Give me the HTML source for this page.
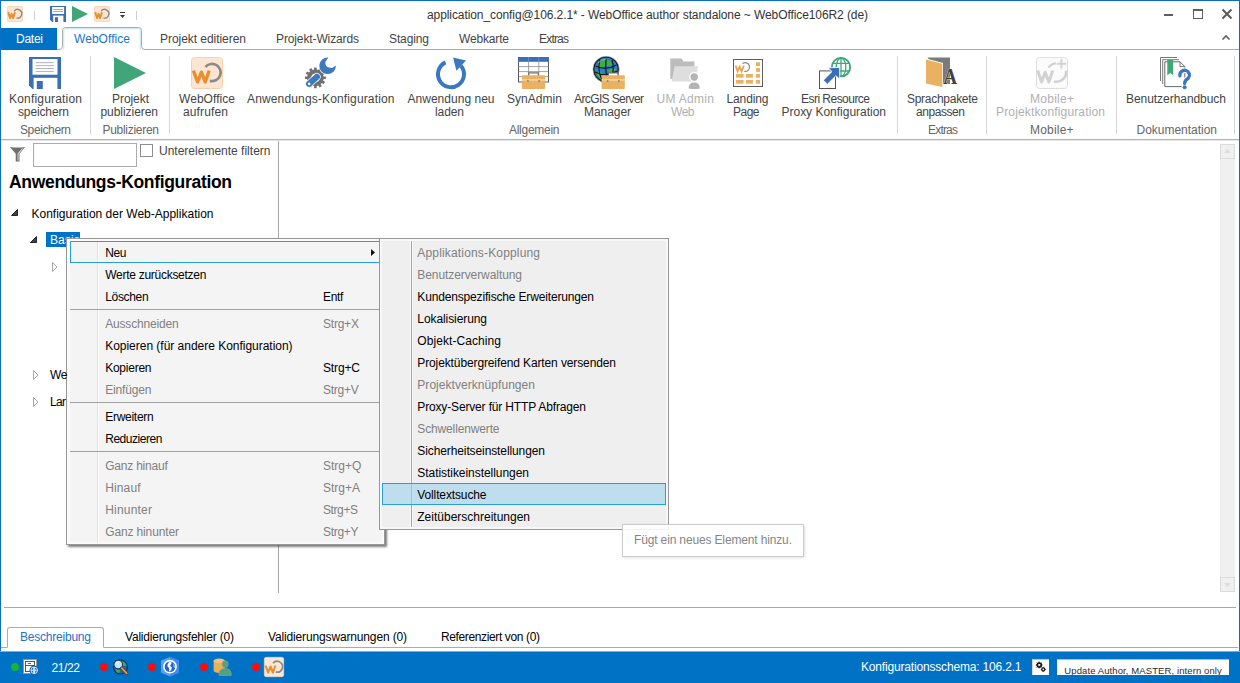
<!DOCTYPE html>
<html><head><meta charset="utf-8"><title>WebOffice author</title>
<style>
html,body{margin:0;padding:0;}
body{width:1240px;height:683px;overflow:hidden;background:#fff;position:relative;font-family:"Liberation Sans",sans-serif;}
.a{position:absolute;}
.t{position:absolute;white-space:pre;}
.sep{position:absolute;width:1px;background:#d6d6d6;top:56px;height:78px;}
.ms{position:absolute;height:1px;background:#a0a0a0;}
svg{position:absolute;overflow:visible;}
</style></head><body>
<!-- window border -->
<div class="a" style="left:0;top:0;width:1240px;height:1px;background:#0a70c6"></div>
<div class="a" style="left:0;top:0;width:1px;height:683px;background:#0a70c6"></div>
<div class="a" style="left:1239px;top:0;width:1px;height:683px;background:#0a70c6"></div>

<!-- quick access separators -->
<div class="a" style="left:34px;top:11px;width:1px;height:9px;background:#d0d0d0"></div>
<div class="a" style="left:136px;top:11px;width:1px;height:9px;background:#d0d0d0"></div>
<svg style="left:7px;top:6px" width="16" height="16" viewBox="0 0 16 16"><rect x="0.5" y="0.5" width="15" height="15" rx="1.2" fill="#fce5d2" stroke="#fad8b8" stroke-width="1"/><path d="M1.2,6.1 L3.1,12.1 L4.6,7.8 L6.1,12.1 L8,6.1" fill="none" stroke="#e8902f" stroke-width="1.9" stroke-linejoin="round"/><path d="M7.2,5 A4.3,4.3 0 1 1 9.4,11.9" fill="none" stroke="#8d8a87" stroke-width="1.4"/></svg><svg style="left:50px;top:6px" width="16" height="16" viewBox="0 0 16 16"><path d="M0,0 H16 V16 H2.2 L0,13.8 Z" fill="#3a6eb5"/><rect x="2.1" y="1" width="12" height="7" fill="#fff"/><path d="M3.2,3.5 H13 M3.2,5.5 H13" stroke="#a3a3a3" stroke-width="0.9"/><rect x="3.2" y="9.6" width="10.2" height="6.4" fill="#fff"/><rect x="5" y="11.2" width="3" height="4.8" fill="#3a6eb5"/></svg><svg style="left:72px;top:6px" width="16" height="16" viewBox="0 0 32 32"><path d="M0,0 L32,16 L0,32 Z" fill="#40a578"/></svg><svg style="left:94px;top:6px" width="16" height="16" viewBox="0 0 16 16"><rect x="0.5" y="0.5" width="15" height="15" rx="1.2" fill="#fce5d2" stroke="#fad8b8" stroke-width="1"/><path d="M1.2,6.1 L3.1,12.1 L4.6,7.8 L6.1,12.1 L8,6.1" fill="none" stroke="#e8902f" stroke-width="1.9" stroke-linejoin="round"/><path d="M7.2,5 A4.3,4.3 0 1 1 9.4,11.9" fill="none" stroke="#8d8a87" stroke-width="1.4"/></svg><div class="a" style="left:120px;top:12px;width:5px;height:1px;background:#333"></div><svg style="left:120px;top:15px" width="5" height="3" viewBox="0 0 5 3"><path d="M0,0 H5 L2.5,3 Z" fill="#333"/></svg>

<!-- window buttons -->
<div class="a" style="left:1164px;top:14px;width:9px;height:2px;background:#5f5f5f"></div>
<div class="a" style="left:1193px;top:9px;width:8px;height:7px;border:1px solid #5f5f5f;border-top-width:2px"></div>
<svg style="left:1222px;top:9px" width="10" height="10" viewBox="0 0 10 10"><path d="M0.5,0.5 L9.5,9.5 M9.5,0.5 L0.5,9.5" stroke="#5a5a5a" stroke-width="2" fill="none"/></svg>
<svg style="left:1222px;top:35px" width="8" height="5" viewBox="0 0 8 5"><path d="M0.5,4.5 L4,1 L7.5,4.5" stroke="#5f5f5f" stroke-width="1.6" fill="none"/></svg>

<!-- tabs row -->
<div class="a" style="left:1px;top:49px;width:1238px;height:1px;background:#ababab"></div>
<div class="a" style="left:1px;top:28px;width:56px;height:22px;background:#0072c6"></div>
<svg style="left:0;top:0" width="160" height="52" viewBox="0 0 160 52"><path d="M58.5,50.5 H145.5 V49.5 Q141.5,49.5 141.5,46.5 V30.5 Q141.5,27.5 138.5,27.5 H65.5 Q62.5,27.5 62.5,30.5 V46.5 Q62.5,49.5 58.5,49.5 Z" fill="#fff"/><path d="M63.5,49.5 V31 Q63.5,28.5 66,28.5 H138 Q140.5,28.5 140.5,31 V49.5" fill="none" stroke="#d3e9fb" stroke-width="1"/><path d="M64.5,49 V31 Q64.5,29.5 66,29.5 H138 Q139.5,29.5 139.5,31 V49" fill="none" stroke="#eef7fe" stroke-width="1"/><path d="M57,49.5 H59 Q62.5,49.5 62.5,46.5 V30.5 Q62.5,27.5 65.5,27.5 H138.5 Q141.5,27.5 141.5,30.5 V46.5 Q141.5,49.5 145,49.5 H147" fill="none" stroke="#ababab" stroke-width="1"/></svg>

<!-- ribbon -->
<div class="a" style="left:1px;top:139px;width:1238px;height:1px;background:#b2b2b2"></div>
<div class="a" style="left:1px;top:140px;width:1238px;height:1px;background:#e6e6e6"></div>
<div class="sep" style="left:90px"></div>
<div class="sep" style="left:169px"></div>
<div class="sep" style="left:897px"></div>
<div class="sep" style="left:986px"></div>
<div class="sep" style="left:1116px"></div>
<div class="sep" style="left:1234px"></div>
<svg style="left:29px;top:57px" width="32" height="32" viewBox="0 0 32 32"><path d="M0,0 H32 V32 H3.5 L0,28.5 Z" fill="#3a6eb5"/><rect x="3.5" y="2" width="25" height="15.7" fill="#fff"/><path d="M6.7,5.7 H24.8 M6.7,8.6 H24.8 M6.7,11.5 H24.8 M6.7,14.4 H24.8" stroke="#a9a9a9" stroke-width="0.9"/><rect x="4.6" y="20.8" width="23.8" height="11.2" fill="#fff"/><rect x="7.8" y="24" width="6" height="8" fill="#3a6eb5"/></svg><svg style="left:114px;top:57px" width="32" height="32" viewBox="0 0 32 32"><path d="M0,0 L32,16 L0,32 Z" fill="#40a578"/></svg><svg style="left:191px;top:57px" width="32" height="32" viewBox="0 0 32 32"><rect x="0.5" y="0.5" width="31" height="31" rx="3" fill="#fce5d2" stroke="#f9d0aa" stroke-width="1"/><path d="M2.4,13.6 L6.6,25 L10.4,15.2 L14.2,25 L18.2,13.6" fill="none" stroke="#e8902f" stroke-width="3.4" stroke-linejoin="round"/><path d="M14.4,9.9 A8.65,8.65 0 1 1 18.8,23.9" fill="none" stroke="#8d8a87" stroke-width="2.7"/></svg><svg style="left:305px;top:57px" width="32" height="32" viewBox="0 0 32 32"><path d="M20.82,19.48 L20.82,22.12 L18.60,22.10 L18.15,23.77 L20.08,24.87 L18.76,27.15 L16.85,26.02 L15.62,27.25 L16.75,29.16 L14.47,30.48 L13.37,28.55 L11.70,29.00 L11.72,31.22 L9.08,31.22 L9.10,29.00 L7.43,28.55 L6.33,30.48 L4.05,29.16 L5.18,27.25 L3.95,26.02 L2.04,27.15 L0.72,24.87 L2.65,23.77 L2.20,22.10 L-0.02,22.12 L-0.02,19.48 L2.20,19.50 L2.65,17.83 L0.72,16.73 L2.04,14.45 L3.95,15.58 L5.18,14.35 L4.05,12.44 L6.33,11.12 L7.43,13.05 L9.10,12.60 L9.08,10.38 L11.72,10.38 L11.70,12.60 L13.37,13.05 L14.47,11.12 L16.75,12.44 L15.62,14.35 L16.85,15.58 L18.76,14.45 L20.08,16.73 L18.15,17.83 L18.60,19.50 Z M10.4,16.5 a4.3,4.3 0 1 0 0.01,0 Z" fill="#707070" fill-rule="evenodd"/><path d="M23.4,0.55 A8.3,8.3 0 1 0 30.9,8.6 L27,11.1 Q23.6,10.8 21.4,9.2 Q19.9,6.6 20.4,4.7 Z" fill="#3c7abf" stroke="#fff" stroke-width="1.3" paint-order="stroke" stroke-linejoin="round"/><g transform="rotate(-42 8 23.4)"><rect x="-0.3" y="20.3" width="16.6" height="6.2" rx="2.9" fill="#3c7abf" stroke="#fff" stroke-width="1.3" paint-order="stroke"/><circle cx="2.9" cy="23.4" r="1.3" fill="#fff"/></g></svg><svg style="left:436px;top:57px" width="32" height="32" viewBox="0 0 32 32"><path d="M9.57,5.39 A13,13 0 1 0 24.9,8.78" fill="none" stroke="#3b79bf" stroke-width="4"/><path d="M17.1,0.5 L30,3.6 L20.4,13.8 Z" fill="#3b79bf"/></svg><svg style="left:518px;top:57px" width="32" height="32" viewBox="0 0 32 32"><rect x="0.5" y="0.5" width="30" height="24.5" fill="#fff" stroke="#5a5a5a" stroke-width="1"/><rect x="0" y="0" width="31" height="4.8" fill="#3a6eb5"/><path d="M0.5,9.6 H30.5 M0.5,14.6 H30.5 M0.5,19.6 H30.5 M10.6,4.8 V25 M20.8,4.8 V25" stroke="#8c8c8c" stroke-width="0.8"/><path d="M10.6,0 V4.8 M20.8,0 V4.8" stroke="#6f93c9" stroke-width="0.8"/><rect x="10.7" y="15.9" width="9.6" height="4" fill="#fff" stroke="#6a6a6a" stroke-width="1.2"/><rect x="3.9" y="18.3" width="23.2" height="13.8" rx="0.8" fill="#e9b161"/><rect x="3.9" y="22.5" width="23.2" height="0.9" fill="#fbf0dc"/><rect x="9.1" y="22.9" width="1.6" height="2.2" fill="#9a8a70"/><rect x="20.299999999999997" y="22.9" width="1.6" height="2.2" fill="#9a8a70"/></svg><svg style="left:593px;top:57px" width="32" height="32" viewBox="0 0 32 32"><circle cx="13.1" cy="12.4" r="13.2" fill="#1b1b1b" stroke="#c9c9c9" stroke-width="0.6"/><circle cx="13.1" cy="12.4" r="11.6" fill="#2d7fd0"/><path d="M6,5 Q10,3 14,2.2 Q18,4 20,8 Q16,10 12,9 Q9,11 6,12 Q4,9 6,5 Z" fill="#3fae3c"/><path d="M15,13 Q19,11 23,12 Q24,16 21,20 Q17,19 15,13 Z" fill="#3fae3c"/><path d="M3,15 Q6,14 9,16 Q10,19 8,22 Q4,19 3,15 Z" fill="#49b845"/><path d="M2.5,9 Q13,14 23.5,8 M2,15 Q13,21 24,14 M7,3 Q4,12 9,23 M13,1.6 Q12,12 14,23.6 M19,3 Q22,12 18,22.5" fill="none" stroke="#101010" stroke-width="1.1"/><path d="M5,6 Q8,2.5 13,2" fill="none" stroke="#9fd0ff" stroke-width="1" opacity="0.7"/><rect x="15.399999999999999" y="15.9" width="9.6" height="4" fill="#fff" stroke="#6a6a6a" stroke-width="1.2"/><rect x="8.6" y="18.3" width="23.2" height="13.8" rx="0.8" fill="#e9b161"/><rect x="8.6" y="22.5" width="23.2" height="0.9" fill="#fbf0dc"/><rect x="13.8" y="22.9" width="1.6" height="2.2" fill="#9a8a70"/><rect x="24.999999999999996" y="22.9" width="1.6" height="2.2" fill="#9a8a70"/></svg><svg style="left:670px;top:57px" width="32" height="32" viewBox="0 0 32 32"><path d="M0.3,1.5 H11.5 L13.6,4.4 H24.4 V22 H0.3 Z" fill="#bcbcbc"/><path d="M4.6,9.2 H28 L25.4,24.4 H1.6 Z" fill="#dedede"/><circle cx="24.2" cy="20" r="5" fill="#fff"/><circle cx="24.2" cy="20" r="3.7" fill="#b4b4b4"/><path d="M17.4,32 Q17.4,24.6 24.2,24.6 Q31,24.6 31,32 Z" fill="#fff"/><path d="M18.6,31.4 Q18.6,25.6 24.2,25.6 Q29.8,25.6 29.8,31.4 Q24.2,32.6 18.6,31.4 Z" fill="#b4b4b4"/></svg><svg style="left:733px;top:57px" width="32" height="32" viewBox="0 0 32 32"><rect x="0.5" y="2.5" width="29" height="27" fill="#fff" stroke="#5e5e5e" stroke-width="1"/><path d="M2.6,8.6 L4.6,14.4 L6.6,9.6 L8.6,14.4 L10.8,8.6" fill="none" stroke="#e8a24a" stroke-width="1.7"/><path d="M9.4,6.6 A4.4,4.4 0 1 1 11.4,14.4" fill="none" stroke="#8d8a87" stroke-width="1.2"/><g fill="#e9b161"><rect x="23" y="5.3" width="4" height="3.8"/><rect x="23" y="11.1" width="4" height="3.8"/><rect x="23" y="17" width="4" height="3.7"/><rect x="23" y="23" width="4" height="3.7"/><rect x="2.9" y="17" width="7.7" height="3.7"/><rect x="13" y="17" width="6.9" height="3.7"/><rect x="2.9" y="23" width="7.7" height="3.7"/><rect x="13" y="23" width="6.9" height="3.7"/></g></svg><svg style="left:819px;top:57px" width="32" height="32" viewBox="0 0 32 32"><circle cx="22" cy="10.2" r="9.2" fill="#fff" stroke="#3fa778" stroke-width="1.9"/><ellipse cx="22" cy="10.2" rx="4.8" ry="9.2" fill="none" stroke="#3fa778" stroke-width="1.3"/><path d="M22,0.9 V19.5 M13.4,6.4 H30.6 M13.4,14 H30.6" stroke="#3fa778" stroke-width="1.3" fill="none"/><rect x="0.5" y="13.9" width="16" height="17.6" fill="#fff" stroke="#555" stroke-width="1"/><path d="M20.6,10.4 L20.6,22.2 L17,18.6 L8.4,27.2 L4.4,23.2 L13,14.6 L9.2,10.8 Z" fill="#3a6eb5" stroke="#fff" stroke-width="0.8"/></svg><svg style="left:926px;top:56.5px" width="32" height="32" viewBox="0 0 32 32"><path d="M1.6,0.4 H24 V27 H17 Z" fill="#7b7b7b"/><path d="M0,1.6 L17,6 L17,30.2 L0,26.4 Z" fill="#fff"/><path d="M0,2.4 L16.3,6.7 L16.3,30 L0,26.4 Z" fill="#e9b161"/><text transform="translate(17.2,27.3) scale(0.8,1)" font-family="Liberation Serif, serif" font-weight="700" font-size="24" fill="#3f3f3f" stroke="#fff" stroke-width="0.6" paint-order="stroke">A</text></svg><svg style="left:1036px;top:57px" width="32" height="32" viewBox="0 0 32 32"><rect x="0.5" y="0.5" width="31" height="31" rx="3" fill="#fbfbfb" stroke="#dedede" stroke-width="1"/><path d="M1.6,13.6 L5.6,25 L9.2,15.2 L12.8,25 L16.8,13.6" fill="none" stroke="#d2d2d2" stroke-width="3" stroke-linejoin="round"/><path d="M12.4,10.6 Q15.6,6.6 20,6.4" fill="none" stroke="#d2d2d2" stroke-width="2.2"/><path d="M30,13.6 A9.6,9.6 0 0 1 18,24.4" fill="none" stroke="#d2d2d2" stroke-width="2.6"/><path d="M25.4,2 V11.6 M20.6,6.8 H30.2" stroke="#d2d2d2" stroke-width="2"/></svg><svg style="left:1160px;top:57px" width="32" height="32" viewBox="0 0 32 32"><path d="M0.5,24 V0.5 H17" fill="none" stroke="#6a6a6a" stroke-width="0.9"/><path d="M2.7,27 V2.7 H19" fill="none" stroke="#6a6a6a" stroke-width="0.9"/><path d="M4.8,4.8 H20 L24.8,9.6 V29.6 H4.8 Z" fill="#fff" stroke="#6a6a6a" stroke-width="1"/><path d="M20,4.8 V9.6 H24.8" fill="none" stroke="#6a6a6a" stroke-width="0.9"/><path d="M7.3,2.9 H13.2 V18.2 L10.25,16 L7.3,18.2 Z" fill="#3fa778"/><path d="M19.9,18.8 A4.8,4.8 0 1 1 28.3,21.2 Q24.6,23.2 24.6,26.4" fill="none" stroke="#fff" stroke-width="5.4" stroke-linecap="round"/><circle cx="24.6" cy="30.2" r="3" fill="#fff"/><path d="M19.9,18.8 A4.8,4.8 0 1 1 28.3,21.2 Q24.6,23.2 24.6,26.4" fill="none" stroke="#3a76c2" stroke-width="3.3" stroke-linecap="round"/><circle cx="24.6" cy="30.2" r="2" fill="#3a76c2"/></svg>

<!-- left panel -->
<svg style="left:10.3px;top:147.4px" width="15.2" height="14.4" viewBox="0 0 15.2 14.4"><path d="M0,0 Q7.6,1.2 15.2,0 L9.5,6.8 V14.4 H5.7 V6.8 Z" fill="#6f6f6f"/><path d="M13.4,1.2 L8.6,7 V13.6 H7.6 V6.6 L12,1.4 Z" fill="#dcdcdc"/></svg>
<div class="a" style="left:33px;top:143px;width:102px;height:22px;border:1px solid #ababab;background:#fff"></div>
<div class="a" style="left:140px;top:144px;width:11px;height:11px;border:1px solid #8e8e8e;background:#fff"></div>
<div class="a" style="left:278px;top:141px;width:1px;height:452px;background:#a8a8a8"></div>
<!-- tree expanders -->
<svg style="left:11.3px;top:209px" width="7" height="7" viewBox="0 0 7 7"><path d="M6.5,0.5 V6.5 H0.5 Z" fill="#404040" stroke="#262626" stroke-width="1"/></svg>
<svg style="left:30px;top:236px" width="7" height="7" viewBox="0 0 7 7"><path d="M6.5,0.5 V6.5 H0.5 Z" fill="#404040" stroke="#262626" stroke-width="1"/></svg>
<svg style="left:52px;top:262px" width="6" height="10" viewBox="0 0 6 10"><path d="M0.5,0.5 L5,5 L0.5,9.5 Z" fill="#fff" stroke="#a6a6a6" stroke-width="1"/></svg>
<svg style="left:33px;top:370px" width="6" height="10" viewBox="0 0 6 10"><path d="M0.5,0.5 L5,5 L0.5,9.5 Z" fill="#fff" stroke="#a6a6a6" stroke-width="1"/></svg>
<svg style="left:33px;top:397px" width="6" height="10" viewBox="0 0 6 10"><path d="M0.5,0.5 L5,5 L0.5,9.5 Z" fill="#fff" stroke="#a6a6a6" stroke-width="1"/></svg>
<!-- selected Basis -->
<div class="a" style="left:46px;top:232px;width:34px;height:15px;background:#0072c8"></div>
<div class="t" style="left:50px;top:232px;font-size:12px;line-height:16px;color:#fff;letter-spacing:0.1px">Basis</div>

<!-- scrollbar -->
<div class="a" style="left:1220px;top:144px;width:15px;height:448px;background:#f0f0f0"></div>
<div class="a" style="left:1220px;top:144px;width:14px;height:14px;border:1px solid #dadada;background:#f0f0f0;box-sizing:content-box;width:13px;height:13px"></div>
<div class="a" style="left:1220px;top:577px;width:13px;height:13px;border:1px solid #dadada;background:#f0f0f0"></div>
<svg style="left:1224px;top:149px" width="7" height="4" viewBox="0 0 7 4"><path d="M0,4 L3.5,0 L7,4 Z" fill="#dcdcdc"/></svg>
<svg style="left:1224px;top:583px" width="7" height="4" viewBox="0 0 7 4"><path d="M0,0 L3.5,4 L7,0 Z" fill="#dcdcdc"/></svg>

<!-- bottom area -->
<div class="a" style="left:4px;top:607px;width:1232px;height:1px;background:#a8a8a8"></div>
<div class="a" style="left:1px;top:647px;width:1237px;height:1px;background:#ababab"></div>
<div class="a" style="left:7px;top:627px;width:97px;height:21px;border:1px solid #ababab;border-bottom:1px solid #fff;border-radius:3px 3px 0 0;background:#fff;box-sizing:border-box"></div>
<!-- status bar -->
<div class="a" style="left:0;top:651px;width:1240px;height:32px;background:#0072c6;box-sizing:border-box;border-top:1px solid #86a9c6"></div>
<div class="a" style="left:11px;top:663px;width:8px;height:8px;border-radius:50%;background:#10b735"></div>
<div class="a" style="left:100px;top:663px;width:8px;height:8px;border-radius:50%;background:#f80d0d"></div>
<div class="a" style="left:148px;top:663px;width:8px;height:8px;border-radius:50%;background:#f80d0d"></div>
<div class="a" style="left:200px;top:663px;width:8px;height:8px;border-radius:50%;background:#f80d0d"></div>
<div class="a" style="left:252px;top:663px;width:8px;height:8px;border-radius:50%;background:#f80d0d"></div>
<div class="a" style="left:1032px;top:659px;width:17px;height:16px;background:#fff;box-sizing:border-box;border-top:1px solid #c4c4c4;border-left:1px solid #d8d8d8"></div>
<div class="a" style="left:1057px;top:659px;width:172px;height:16px;background:#fff;overflow:hidden;box-sizing:border-box;border-top:1px solid #b9b9b9">
  <div class="t" style="left:7.3px;top:3.9px;font-size:9.5px;line-height:14px;color:#2b2b2b;letter-spacing:0.1px">Update Author, MASTER, intern only</div>
</div>
<svg style="left:23px;top:659px" width="16" height="16" viewBox="0 0 16 16"><rect x="0.5" y="0.5" width="13" height="14" fill="#fff" stroke="#a39484" stroke-width="1"/><rect x="2.5" y="2.5" width="9" height="4" fill="#fff" stroke="#555" stroke-width="1"/><rect x="2.5" y="6.5" width="9" height="6" fill="#fff" stroke="#555" stroke-width="1"/><path d="M4.8,4.5 H8" stroke="#2f6fc0" stroke-width="1.1"/><circle cx="11.2" cy="11.3" r="4.7" fill="#0a63b8"/><circle cx="11.2" cy="11.3" r="3.3" fill="#1269c4" stroke="#fff" stroke-width="0.8"/><path d="M7.9,11.3 H14.5 M11.2,8 V14.6 M11.2,8 Q9.2,11.3 11.2,14.6 M11.2,8 Q13.2,11.3 11.2,14.6" stroke="#fff" stroke-width="0.7" fill="none"/></svg><svg style="left:112px;top:659px" width="16" height="16" viewBox="0 0 16 16"><circle cx="8.4" cy="8" r="7.6" fill="#14306b"/><circle cx="8.4" cy="8" r="6.4" fill="#1f63b5"/><path d="M9,2 Q13,2.4 14.4,6 Q12.4,8 10.4,6.4 Q9.4,4 9,2 Z M3.4,10.4 Q6,9.6 8,11.6 Q8.4,13.6 6.4,14.2 Q4,13 3.4,10.4 Z M11,9.6 Q13.6,9.6 14,11.4 Q12.6,13.4 11,12 Z" fill="#3fae49"/><circle cx="6.2" cy="5.6" r="4.3" fill="#bfe9f7" stroke="#233a5e" stroke-width="1.1"/><path d="M3.8,4.6 Q5,2.8 7,2.9" stroke="#fff" stroke-width="1" fill="none"/><path d="M9.6,9 L14.8,14.4" stroke="#5a3a1c" stroke-width="3" stroke-linecap="round"/><path d="M9.8,9.2 L14.7,14.3" stroke="#ef9a3c" stroke-width="1.7" stroke-linecap="round"/></svg><svg style="left:161px;top:657px" width="18" height="19.5" viewBox="0 0 18 19.5"><path d="M9,0 L18,3.6 V15.4 L9,19.5 L0,15.4 V3.6 Z" fill="#55a2f5"/><path d="M9,0 L18,3.6 V15.4 L9,19.5 Z" fill="#3f8aea"/><circle cx="9" cy="9.7" r="6.9" fill="#fff"/><circle cx="9" cy="9.7" r="5.3" fill="#1d63d2"/><path d="M8.6,4.6 Q11,5 10.4,7 Q8.4,8.2 9.6,9.6 Q11.6,10.2 10.4,12.4 Q9.4,14.4 7.8,14.8 Q9,12 7.6,10.6 Q5.6,9.4 6.6,7.4 Q7.4,6.4 8.6,4.6 Z" fill="#fff"/><path d="M12.4,6.4 Q14,8.6 13.6,11.4 Q12.4,10 12.4,6.4 Z" fill="#fff"/></svg><svg style="left:212.5px;top:658px" width="19" height="18" viewBox="0 0 19 18"><path d="M0.6,2.8 V12.6 A5.6,2.3 0 0 0 11.8,12.6 V2.8 Z" fill="#e9b05b"/><ellipse cx="6.2" cy="2.8" rx="5.6" ry="2.3" fill="#f1c179"/><rect x="9.3" y="3" width="5.8" height="6.2" rx="2.2" fill="#4fa47c" stroke="#8b9a8c" stroke-width="0.8"/><path d="M6,17.4 Q5.6,10.4 12.2,10.6 Q18.6,10.4 18.2,17.4 Z" fill="#4fa47c" stroke="#8b9a8c" stroke-width="0.8"/></svg><svg style="left:264px;top:657px" width="20" height="20" viewBox="0 0 32 32"><rect x="0.5" y="0.5" width="31" height="31" rx="3" fill="#fce8d8" stroke="#f7d9bd" stroke-width="1"/><path d="M2.4,13.6 L6.6,25 L10.4,15.2 L14.2,25 L18.2,13.6" fill="none" stroke="#e8902f" stroke-width="3.4" stroke-linejoin="round"/><path d="M14.4,9.9 A8.65,8.65 0 1 1 18.8,23.9" fill="none" stroke="#8d8a87" stroke-width="2.7"/></svg><svg style="left:1035px;top:661px" width="12" height="12" viewBox="0 0 12 12"><circle cx="4.2" cy="4" r="2.1" fill="none" stroke="#111" stroke-width="1.5"/><path d="M4.2,0.6 V7.4 M0.8,4 H7.6 M1.8,1.6 L6.6,6.4 M6.6,1.6 L1.8,6.4" stroke="#111" stroke-width="0.9"/><circle cx="4.2" cy="4" r="1.1" fill="#fff"/><circle cx="8.3" cy="8.4" r="1.5" fill="#fff" stroke="#111" stroke-width="1.3"/><path d="M8.3,5.9 V10.9 M5.8,8.4 H10.8" stroke="#111" stroke-width="0.8"/><circle cx="8.3" cy="8.4" r="0.8" fill="#fff"/></svg>

<!-- context menu 1 -->
<div class="a" style="left:66px;top:238px;width:317px;height:305px;background:#f4f4f4;border:1px solid #979797;box-shadow:2px 2px 2px rgba(0,0,0,0.5)"></div>
<div class="a" style="left:67px;top:239px;width:317px;height:305px;box-sizing:border-box;border:2px solid #fafafa;border-left-width:3px"></div>
<div class="a" style="left:97px;top:241px;width:1px;height:302px;background:#e2e2e2"></div>
<div class="a" style="left:98px;top:241px;width:1px;height:302px;background:#fdfdfd"></div>
<div class="a" style="left:70px;top:241px;width:310px;height:20px;border:1px solid #26a0da;background:transparent"></div>
<div class="ms" style="left:70px;top:309px;width:310px"></div>
<div class="ms" style="left:70px;top:402px;width:310px"></div>
<div class="ms" style="left:70px;top:451px;width:310px"></div>
<svg style="left:371px;top:249px" width="4" height="7" viewBox="0 0 4 7"><path d="M0,0 L4,3.5 L0,7 Z" fill="#111"/></svg>

<!-- submenu -->
<div class="a" style="left:379px;top:238px;width:288px;height:290px;background:#efefef;border:1px solid #979797"></div>
<div class="a" style="left:380px;top:239px;width:288px;height:290px;box-sizing:border-box;border:2px solid #f8f8f8"></div>
<div class="a" style="left:410px;top:241px;width:1px;height:286px;background:#f8f8f8"></div>
<div class="a" style="left:411px;top:241px;width:1px;height:286px;background:#a6a6a6"></div>
<div class="a" style="left:412px;top:241px;width:1px;height:286px;background:#f8f8f8"></div>
<div class="a" style="left:382px;top:483px;width:282px;height:20px;border:1px solid #26a0da;background:rgba(150,205,235,0.55)"></div>

<!-- tooltip -->
<div class="a" style="left:622px;top:524px;width:180px;height:31px;border:1px solid rgba(160,160,160,0.55);background:rgba(255,255,255,0.88);box-shadow:1px 1px 3px rgba(0,0,0,0.12)"></div>

<div class="t" style="left:427px;top:7.0px;font-size:12px;line-height:16px;color:#333;font-weight:400;letter-spacing:-0.089px">application_config@106.2.1* - WebOffice author standalone ~ WebOffice106R2 (de)</div>
<div class="t" style="left:16px;top:31.0px;font-size:12px;line-height:16px;color:#fff;font-weight:400;letter-spacing:-0.254px">Datei</div>
<div class="t" style="left:74px;top:31.0px;font-size:12px;line-height:16px;color:#1e72c8;font-weight:400;letter-spacing:0.051px">WebOffice</div>
<div class="t" style="left:160px;top:31.0px;font-size:12px;line-height:16px;color:#444444;font-weight:400;letter-spacing:-0.045px">Projekt editieren</div>
<div class="t" style="left:276px;top:31.0px;font-size:12px;line-height:16px;color:#444444;font-weight:400;letter-spacing:-0.121px">Projekt-Wizards</div>
<div class="t" style="left:389px;top:31.0px;font-size:12px;line-height:16px;color:#444444;font-weight:400;letter-spacing:-0.117px">Staging</div>
<div class="t" style="left:459px;top:31.0px;font-size:12px;line-height:16px;color:#444444;font-weight:400;letter-spacing:-0.163px">Webkarte</div>
<div class="t" style="left:539px;top:31.0px;font-size:12px;line-height:16px;color:#444444;font-weight:400;letter-spacing:-0.803px">Extras</div>
<div class="t" style="left:9px;top:91.0px;font-size:12px;line-height:16px;color:#444444;font-weight:400;letter-spacing:0.19px">Konfiguration</div>
<div class="t" style="left:18px;top:104.0px;font-size:12px;line-height:16px;color:#444444;font-weight:400;letter-spacing:-0.129px">speichern</div>
<div class="t" style="left:20px;top:122.0px;font-size:12px;line-height:16px;color:#666;font-weight:400;letter-spacing:-0.381px">Speichern</div>
<div class="t" style="left:112px;top:91.0px;font-size:12px;line-height:16px;color:#444444;font-weight:400;letter-spacing:-0.06px">Projekt</div>
<div class="t" style="left:100.5px;top:104.0px;font-size:12px;line-height:16px;color:#444444;font-weight:400;letter-spacing:-0.055px">publizieren</div>
<div class="t" style="left:102.5px;top:122.0px;font-size:12px;line-height:16px;color:#666;font-weight:400;letter-spacing:-0.287px">Publizieren</div>
<div class="t" style="left:179px;top:91.0px;font-size:12px;line-height:16px;color:#444444;font-weight:400;letter-spacing:0.051px">WebOffice</div>
<div class="t" style="left:183px;top:104.0px;font-size:12px;line-height:16px;color:#444444;font-weight:400;letter-spacing:0.136px">aufrufen</div>
<div class="t" style="left:247px;top:91.0px;font-size:12px;line-height:16px;color:#444444;font-weight:400;letter-spacing:0.147px">Anwendungs-Konfiguration</div>
<div class="t" style="left:407.5px;top:91.0px;font-size:12px;line-height:16px;color:#444444;font-weight:400;letter-spacing:0.021px">Anwendung neu</div>
<div class="t" style="left:435px;top:104.0px;font-size:12px;line-height:16px;color:#444444;font-weight:400;letter-spacing:-0.094px">laden</div>
<div class="t" style="left:507px;top:91.0px;font-size:12px;line-height:16px;color:#444444;font-weight:400;letter-spacing:0.042px">SynAdmin</div>
<div class="t" style="left:509px;top:122.0px;font-size:12px;line-height:16px;color:#666;font-weight:400;letter-spacing:-0.275px">Allgemein</div>
<div class="t" style="left:574px;top:91.0px;font-size:12px;line-height:16px;color:#444444;font-weight:400;letter-spacing:-0.613px">ArcGIS Server</div>
<div class="t" style="left:584px;top:104.0px;font-size:12px;line-height:16px;color:#444444;font-weight:400;letter-spacing:-0.062px">Manager</div>
<div class="t" style="left:656.5px;top:91.0px;font-size:12px;line-height:16px;color:#b0b0b0;font-weight:400;letter-spacing:0.306px">UM Admin</div>
<div class="t" style="left:671px;top:104.0px;font-size:12px;line-height:16px;color:#b0b0b0;font-weight:400;letter-spacing:-0.484px">Web</div>
<div class="t" style="left:726.5px;top:91.0px;font-size:12px;line-height:16px;color:#444444;font-weight:400;letter-spacing:-0.12px">Landing</div>
<div class="t" style="left:733px;top:104.0px;font-size:12px;line-height:16px;color:#444444;font-weight:400;letter-spacing:-0.51px">Page</div>
<div class="t" style="left:801px;top:91.0px;font-size:12px;line-height:16px;color:#444444;font-weight:400;letter-spacing:-0.53px">Esri Resource</div>
<div class="t" style="left:781.5px;top:104.0px;font-size:12px;line-height:16px;color:#444444;font-weight:400;letter-spacing:-0.013px">Proxy Konfiguration</div>
<div class="t" style="left:907px;top:91.0px;font-size:12px;line-height:16px;color:#444444;font-weight:400;letter-spacing:-0.278px">Sprachpakete</div>
<div class="t" style="left:916px;top:104.0px;font-size:12px;line-height:16px;color:#444444;font-weight:400;letter-spacing:-0.435px">anpassen</div>
<div class="t" style="left:928px;top:122.0px;font-size:12px;line-height:16px;color:#666;font-weight:400;letter-spacing:-0.803px">Extras</div>
<div class="t" style="left:1030px;top:91.0px;font-size:12px;line-height:16px;color:#b0b0b0;font-weight:400;letter-spacing:0.273px">Mobile+</div>
<div class="t" style="left:996px;top:104.0px;font-size:12px;line-height:16px;color:#b0b0b0;font-weight:400;letter-spacing:0.155px">Projektkonfiguration</div>
<div class="t" style="left:1030px;top:122.0px;font-size:12px;line-height:16px;color:#666;font-weight:400;letter-spacing:0.19px">Mobile+</div>
<div class="t" style="left:1126px;top:91.0px;font-size:12px;line-height:16px;color:#444444;font-weight:400;letter-spacing:-0.05px">Benutzerhandbuch</div>
<div class="t" style="left:1136.5px;top:122.0px;font-size:12px;line-height:16px;color:#666;font-weight:400;letter-spacing:-0.018px">Dokumentation</div>
<div class="t" style="left:159px;top:143.0px;font-size:12px;line-height:16px;color:#444;font-weight:400;letter-spacing:0.005px">Unterelemente filtern</div>
<div class="t" style="left:9px;top:170.5px;font-size:17.5px;line-height:23px;color:#000;font-weight:700;letter-spacing:-0.321px">Anwendungs-Konfiguration</div>
<div class="t" style="left:31.5px;top:205.5px;font-size:12px;line-height:16px;color:#000;font-weight:400;letter-spacing:0.003px">Konfiguration der Web-Applikation</div>
<div class="t" style="left:50px;top:367.0px;font-size:12px;line-height:16px;color:#000;font-weight:400;letter-spacing:-0.297px">We</div>
<div class="t" style="left:50px;top:393.5px;font-size:12px;line-height:16px;color:#000;font-weight:400;letter-spacing:-0.672px">Lar</div>
<div class="t" style="left:20px;top:629.0px;font-size:12px;line-height:16px;color:#1e72c8;font-weight:400;letter-spacing:-0.217px">Beschreibung</div>
<div class="t" style="left:125px;top:629.0px;font-size:12px;line-height:16px;color:#000;font-weight:400;letter-spacing:-0.199px">Validierungsfehler (0)</div>
<div class="t" style="left:268px;top:629.0px;font-size:12px;line-height:16px;color:#000;font-weight:400;letter-spacing:-0.147px">Validierungswarnungen (0)</div>
<div class="t" style="left:441px;top:629.0px;font-size:12px;line-height:16px;color:#000;font-weight:400;letter-spacing:-0.371px">Referenziert von (0)</div>
<div class="t" style="left:51.5px;top:659.8px;font-size:12px;line-height:16px;color:#fff;font-weight:400;letter-spacing:-0.383px">21/22</div>
<div class="t" style="left:861px;top:658.5px;font-size:12px;line-height:16px;color:#fff;font-weight:400;letter-spacing:-0.177px">Konfigurationsschema: 106.2.1</div>
<div class="t" style="left:634px;top:532.3px;font-size:12px;line-height:16px;color:#858585;font-weight:400;letter-spacing:-0.147px">Fügt ein neues Element hinzu.</div>
<div class="t" style="left:105.2px;top:245.0px;font-size:12px;line-height:16px;color:#000;font-weight:400;letter-spacing:-0.358px">Neu</div>
<div class="t" style="left:105.2px;top:267.0px;font-size:12px;line-height:16px;color:#000;font-weight:400;letter-spacing:-0.272px">Werte zurücksetzen</div>
<div class="t" style="left:105.2px;top:289.0px;font-size:12px;line-height:16px;color:#000;font-weight:400;letter-spacing:-0.329px">Löschen</div>
<div class="t" style="left:323px;top:289.0px;font-size:12px;line-height:16px;color:#000;font-weight:400;letter-spacing:-0.32px">Entf</div>
<div class="t" style="left:105.2px;top:316.0px;font-size:12px;line-height:16px;color:#808080;font-weight:400;letter-spacing:-0.172px">Ausschneiden</div>
<div class="t" style="left:323px;top:316.0px;font-size:12px;line-height:16px;color:#808080;font-weight:400;letter-spacing:-0.226px">Strg+X</div>
<div class="t" style="left:105.2px;top:338.0px;font-size:12px;line-height:16px;color:#000;font-weight:400;letter-spacing:-0.021px">Kopieren (für andere Konfiguration)</div>
<div class="t" style="left:105.2px;top:360.0px;font-size:12px;line-height:16px;color:#000;font-weight:400;letter-spacing:-0.25px">Kopieren</div>
<div class="t" style="left:323px;top:360.0px;font-size:12px;line-height:16px;color:#000;font-weight:400;letter-spacing:-0.138px">Strg+C</div>
<div class="t" style="left:105.2px;top:382.0px;font-size:12px;line-height:16px;color:#808080;font-weight:400;letter-spacing:-0.154px">Einfügen</div>
<div class="t" style="left:323px;top:382.0px;font-size:12px;line-height:16px;color:#808080;font-weight:400;letter-spacing:-0.266px">Strg+V</div>
<div class="t" style="left:105.2px;top:409.0px;font-size:12px;line-height:16px;color:#000;font-weight:400;letter-spacing:-0.273px">Erweitern</div>
<div class="t" style="left:105.2px;top:431.0px;font-size:12px;line-height:16px;color:#000;font-weight:400;letter-spacing:-0.453px">Reduzieren</div>
<div class="t" style="left:105.2px;top:458.0px;font-size:12px;line-height:16px;color:#808080;font-weight:400;letter-spacing:-0.212px">Ganz hinauf</div>
<div class="t" style="left:323px;top:458.0px;font-size:12px;line-height:16px;color:#808080;font-weight:400;letter-spacing:-0.012px">Strg+Q</div>
<div class="t" style="left:105.2px;top:480.0px;font-size:12px;line-height:16px;color:#808080;font-weight:400;letter-spacing:0.142px">Hinauf</div>
<div class="t" style="left:323px;top:480.0px;font-size:12px;line-height:16px;color:#808080;font-weight:400;letter-spacing:-0.006px">Strg+A</div>
<div class="t" style="left:105.2px;top:502.0px;font-size:12px;line-height:16px;color:#808080;font-weight:400;letter-spacing:0.206px">Hinunter</div>
<div class="t" style="left:323px;top:502.0px;font-size:12px;line-height:16px;color:#808080;font-weight:400;letter-spacing:-0.406px">Strg+S</div>
<div class="t" style="left:105.2px;top:524.0px;font-size:12px;line-height:16px;color:#808080;font-weight:400;letter-spacing:-0.133px">Ganz hinunter</div>
<div class="t" style="left:323px;top:524.0px;font-size:12px;line-height:16px;color:#808080;font-weight:400;letter-spacing:-0.286px">Strg+Y</div>
<div class="t" style="left:417.3px;top:245.0px;font-size:12px;line-height:16px;color:#808080;font-weight:400;letter-spacing:0.164px">Applikations-Kopplung</div>
<div class="t" style="left:417.3px;top:267.0px;font-size:12px;line-height:16px;color:#808080;font-weight:400;letter-spacing:-0.08px">Benutzerverwaltung</div>
<div class="t" style="left:417.3px;top:289.0px;font-size:12px;line-height:16px;color:#000;font-weight:400;letter-spacing:-0.158px">Kundenspezifische Erweiterungen</div>
<div class="t" style="left:417.3px;top:311.0px;font-size:12px;line-height:16px;color:#000;font-weight:400;letter-spacing:-0.085px">Lokalisierung</div>
<div class="t" style="left:417.3px;top:333.0px;font-size:12px;line-height:16px;color:#000;font-weight:400;letter-spacing:0.075px">Objekt-Caching</div>
<div class="t" style="left:417.3px;top:355.0px;font-size:12px;line-height:16px;color:#000;font-weight:400;letter-spacing:-0.117px">Projektübergreifend Karten versenden</div>
<div class="t" style="left:417.3px;top:377.0px;font-size:12px;line-height:16px;color:#808080;font-weight:400;letter-spacing:0.05px">Projektverknüpfungen</div>
<div class="t" style="left:417.3px;top:399.0px;font-size:12px;line-height:16px;color:#000;font-weight:400;letter-spacing:-0.155px">Proxy-Server für HTTP Abfragen</div>
<div class="t" style="left:417.3px;top:421.0px;font-size:12px;line-height:16px;color:#808080;font-weight:400;letter-spacing:-0.142px">Schwellenwerte</div>
<div class="t" style="left:417.3px;top:443.0px;font-size:12px;line-height:16px;color:#000;font-weight:400;letter-spacing:-0.104px">Sicherheitseinstellungen</div>
<div class="t" style="left:417.3px;top:465.0px;font-size:12px;line-height:16px;color:#000;font-weight:400;letter-spacing:-0.049px">Statistikeinstellungen</div>
<div class="t" style="left:417.3px;top:487.0px;font-size:12px;line-height:16px;color:#000;font-weight:400;letter-spacing:-0.127px">Volltextsuche</div>
<div class="t" style="left:417.3px;top:509.0px;font-size:12px;line-height:16px;color:#000;font-weight:400;letter-spacing:-0.002px">Zeitüberschreitungen</div>
</body></html>
